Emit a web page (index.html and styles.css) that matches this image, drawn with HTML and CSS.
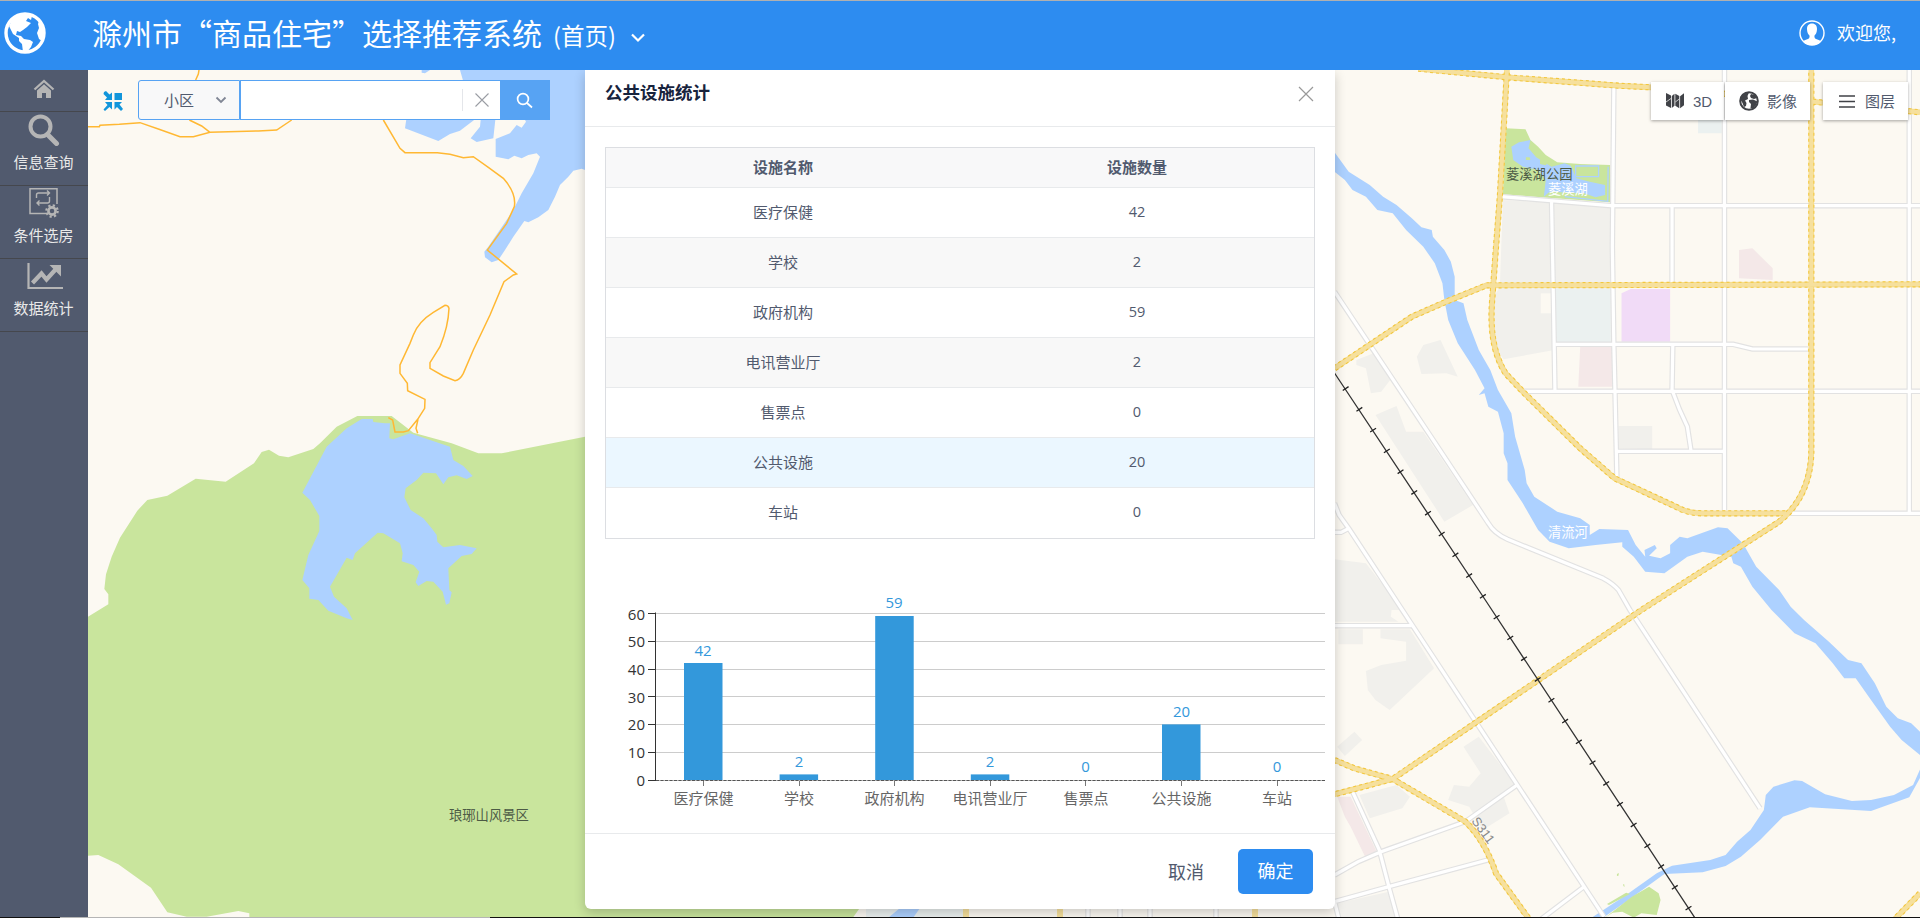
FILE: index.html
```html
<!DOCTYPE html>
<html lang="zh-CN">
<head>
<meta charset="utf-8">
<title>滁州市“商品住宅”选择推荐系统</title>
<link rel="stylesheet" href="styles.css">
</head>
<body>
<div class="app">
  <header class="header">
    <svg class="logo" viewBox="0 0 42 42"><circle cx="21" cy="21" r="19" fill="none" stroke="#fff" stroke-width="3.4"/><path fill="#fff" d="M8 8 L14 4 L22 2 L28 4 L27 8 L24 6 L22 9 L27 11 L23 15 L19 18 L16 20 L13 19 L12 23 L17 24 L20 27 L26 28 L29 30 L27 35 L23 40 L19 40 L18 32 L15 29 L15 26 L9 22 L5 14z"/><path fill="#fff" d="M35 9l3 4 2 8-2 8-3-2-2-6 2-5-1-4z"/></svg>
    <h1 class="title">滁州市“商品住宅”选择推荐系统</h1>
    <span class="subtitle">(首页)</span>
    <svg class="caret" viewBox="0 0 16 12"><path d="M2 2.5l6 6 6-6"/></svg>
    <div class="user">
      <svg class="avatar" viewBox="0 0 26 26"><circle cx="13" cy="13" r="12" fill="none" stroke="#fff" stroke-width="1.4"/><path fill="#fff" d="M13 3.5c-3.4 0-5 2.3-5 5.4 0 3.4 1.200 5.400 2.600 6.800 0 1.900-.3 2.700-2.300 3.500-1.900.7-3.400 1.200-4.400 2.300A12 12 0 0 0 13 25a12 12 0 0 0 9.100-3.500c-1-1.100-2.500-1.600-4.400-2.300-2-.8-2.300-1.600-2.300-3.500C16.800 14.300 18 12.300 18 8.900c0-3.100-1.600-5.400-5-5.400z"/></svg>
      <span>欢迎您,</span>
    </div>
  </header>
  <div class="main">
    <nav class="sidebar">
      <a class="side-item home"><svg width="22" height="20" viewBox="0 0 22 20"><path d="M1.500 10.500L11 2l9.500 8.500" fill="none" stroke="#b5b5b5" stroke-width="2.300"/><path fill="#b5b5b5" d="M4 11.500l7-6.200 7 6.200V19h-5v-5H9v5H4z"/></svg></a>
      <a class="side-item first"><svg width="34" height="32" viewBox="0 0 34 32"><circle cx="13.500" cy="12.500" r="10" fill="none" stroke="#b5b5b5" stroke-width="4"/><path d="M20.500 20.500l9 9" stroke="#b5b5b5" stroke-width="5" stroke-linecap="round"/></svg><span>信息查询</span></a>
      <a class="side-item"><svg width="34" height="32" viewBox="0 0 34 32" fill="none" stroke="#b5b5b5"><path d="M19 26.500H3V1.700h27V17" stroke-width="1.500"/><path d="M9.500 11V8q0-2 2-2h11M20 3.500l2.500 2.500L20 8.500M22.500 10v4q0 2-2 2H10M12.500 13.500L10 16l2.500 2.500" stroke-width="1.400"/><circle cx="25" cy="24" r="3.600" stroke-width="2.600"/><circle cx="25" cy="24" r="5.700" stroke-width="2.200" stroke-dasharray="2.240 2.240"/></svg><span>条件选房</span></a>
      <a class="side-item"><svg width="38" height="32" viewBox="0 0 38 32"><path d="M3.500 3v25H38" fill="none" stroke="#b5b5b5" stroke-width="2.200"/><path d="M7.500 23l9-9.500 5 6L31 9" fill="none" stroke="#b5b5b5" stroke-width="4.200"/><path fill="#b5b5b5" d="M24.500 5H36v11.500z"/></svg><span>数据统计</span></a>
    </nav>
    <section class="map-area">
      <svg class="map" viewBox="88 70 1832 847" preserveAspectRatio="none">
        <defs>
          <g id="streets">
            <g transform="translate(1320 0) scale(.38265 .33333)">
              <path d="M768 255L764 740L768 1040L771 1180L776 1437M605 600L610 900L614 1172M475 590L760 617H1568M920 618V850M1057 200V1530M1540 200V1538"/>
              <g transform="translate(0 870)"><path d="M615 163H1080L1130 177H1275M922 165L920 300L940 360L960 410L970 485M530 304H1568M775 484H1057M1230 670H1568M38 5L290 440L440 700Q455 730 490 748L740 865Q765 880 780 900L810 960L1150 1555M38 640L50 675L75 715L215 960L742 1880M38 727H55L75 715"/></g>
              <g transform="translate(0 1800)"><path d="M38 77H240M38 825L100 785L160 755L380 665L515 555M85 575L155 750L180 860L204 960M38 905L180 860L445 778M575 960L690 860M38 905L50 960"/></g>
            </g>
          </g>
          <g id="highways">
            <g transform="translate(1320 0) scale(.38265 .33333)">
              <path d="M489 200L480 385L470 590L460 740L450 900Q440 1040 485 1120L530 1175L680 1345L770 1435L930 1520Q960 1540 1000 1540H1218M257 206L490 232L780 257L865 262L1290 305L1568 337M38 1105L240 950L330 905L435 856L1568 853M1284 200V1360Q1280 1490 1200 1565L840 1830L190 2337L38 2383M38 2280L90 2305L190 2337L380 2465Q430 2520 460 2620L548 2760M1568 2680L1500 2760"/>
            </g>
          </g>
        </defs>
        <rect x="88" y="70" width="1832" height="847" fill="#fcf9f2"/>
        <g transform="translate(80 60) scale(.33333)">
          <path class="water" d="M1140 30H1530V335L1505 326L1480 332L1465 350L1440 375L1425 410L1405 450L1375 472L1345 487L1333 483L1300 530L1275 570L1255 600L1235 607L1215 592L1213 575L1225 560L1300 450L1325 400L1360 340L1380 290L1370 280L1345 285L1325 295L1303 287L1285 298L1247 290V237L1290 220L1310 195L1325 203L1338 185L1330 170H1247L1240 235L1190 246L1172 235L1200 200L1203 170H1195L1140 212L1110 222L1075 243L975 205L980 170L1160 100zM1025 30H1050L1035 40L1025 38z"/>
        </g>
        <g transform="translate(80 400) scale(.33333)">
          <path class="park" d="M24 650L85 613V583L73 567L78 523L95 470L120 413L172 332L202 300L262 287L347 236L437 245L522 190L545 156L567 149L597 167L625 172L700 147L720 130L770 80L832 48H935L1000 98L1115 130L1195 160H1265L1515 110L2500 1000L2342 1520L2318 1554H508V1540L475 1533L380 1550H320L262 1537L213 1463L115 1393L55 1365L24 1367z"/>
          <path class="water" d="M845 57H878L880 66L915 70H930L928 115L940 118L990 100L1110 140L1120 180L1150 198L1178 228L1160 237L1130 226L1105 232L1090 253L1075 230L1068 220L1030 218L1010 240L977 265L973 292L992 330L1030 355L1055 385L1070 405L1072 425L1090 442L1140 435L1190 445L1175 462L1145 468L1105 505L1108 570L1115 577L1108 610L1098 614L1088 575L1060 545L1040 543L1015 558L1007 547L1018 515L1000 495L965 484L968 460L960 430L910 400L893 398L825 460L818 480L800 473L750 560L762 590L800 625L818 660L800 655L745 632L715 600L688 596V565L667 540L685 465L718 393V348L690 300L667 278L740 140L800 85z"/>
        </g>
        <g class="trail" transform="translate(80 60) scale(.33333)">
          <path d="M24 200H58L60 196L118 193L180 188L235 207L300 230H340L390 217L535 213L590 210L635 180M328 180L365 198L390 217M357 30L355 42L347 60M910 180L960 265L975 278H1072L1110 283L1150 293L1180 290L1225 322L1270 355Q1310 400 1303 440L1280 490L1222 570L1310 642L1300 645L1272 665L1230 765L1180 870L1150 940Q1140 960 1125 962L1090 948L1050 925V908L1080 860Q1105 800 1107 745Q1105 736 1095 736L1060 757Q1015 785 1000 825L990 850L960 915V940L982 970L983 992L1035 1018L1034 1045L1013 1078L985 1112L970 1116H945L938 1080L925 1073M1014 1078L1008 1105L1013 1120"/>
        </g>
        <g transform="translate(1320 0) scale(.38265 .33333)">
          <path class="block" d="M478 600L758 620V870H612V1050L480 1078L455 1040V890L470 860z"/>
          <path fill="#fcf9f2" d="M577 880H612V940H577z"/>
          <path class="civic" d="M615 867H760V1030H615zM988 340H1050V400H988z"/>
          <path fill="#f1dbf7" d="M788 880L812 867H915V1025H788z"/>
          <path class="pink" d="M1095 750L1130 745L1183 805V840L1095 835zM680 1040H765V1160H675z"/>
          <path class="park" d="M485 385L537 388L550 420L570 440L590 465L620 487L680 492L758 495V607L478 583z"/>
          <path class="water" d="M500 440L520 427L550 420L545 445L565 472L590 490L605 500L640 490L655 497L670 535L705 545L745 555V585L720 592L690 580L600 575L585 590L590 540L570 510L530 500L505 480z"/>
          <path fill="none" stroke="#add1ff" stroke-width="1.300" d="M668 498H728V530H668zM640 590L752 604L753 500"/>
          <path class="park" d="M538 472l10 0 2 8-12 0zM575 480l25 0-10 16-15-4z"/>
          <path class="water" d="M38 457L75 515L130 555L165 590L200 615L240 655L265 682L292 690L295 710L325 750L342 785L352 830L352 900L375 910L385 960L415 1050L445 1110L465 1170L500 1240L510 1310L535 1410L540 1450L560 1490L620 1535L680 1555L705 1575V1605L730 1587L805 1590L825 1635L850 1670L848 1650L875 1635L880 1645L860 1667L890 1675L915 1660V1635L940 1610L960 1615L1040 1582L1065 1585L1105 1630L1140 1700L1200 1770L1230 1820L1265 1860L1330 1925L1380 1980L1415 1990L1450 2050L1480 2120L1510 2155L1545 2170L1568 2195V2265L1520 2220L1490 2180L1440 2100L1400 2035H1370L1340 1990L1295 1930L1240 1900L1180 1830L1130 1760L1100 1700L1080 1690L1075 1670L1000 1655L960 1670L900 1720L850 1715L820 1670L790 1640V1627L720 1635L650 1645L600 1625L570 1590L530 1510L490 1440V1390L480 1360V1300L465 1235L440 1220L430 1180L415 1185L430 1165L405 1110L360 1030L335 960L325 900L320 850L300 790L270 740L225 690L190 640L150 630L120 590L85 570L65 540L38 515z"/>
        </g>
        <g transform="translate(1320 290) scale(.38265 .33333)">
          <path class="block" d="M780 408H868V478L780 475zM270 165L315 150L360 260L330 250L265 252L253 200zM95 210L140 190L190 260L160 305L133 310L120 235L95 225zM145 375L200 348L225 425H270L400 645L325 695zM38 808L120 820L215 960H38z"/>
        </g>
        <g transform="translate(1320 600) scale(.38265 .33333)">
          <path class="block" d="M38 0H190L185 50L205 65H38zM48 88H112V133H48zM158 88H235L298 205L182 330L145 300L125 270L120 213L160 195L225 182V125L158 115zM45 440L90 395L110 420L65 468zM103 585L200 555L235 590L215 625L130 655zM375 440L415 410L515 560L480 590L495 640L425 690L390 620L335 600L350 555L390 560L420 520zM45 910L180 875L200 960H55z"/>
          <path class="pink" d="M45 590L80 590L150 760L118 770L80 680L65 650z"/>
          <path class="water" d="M1575 490L1550 555L1500 585L1440 600L1390 603L1320 583L1260 543L1240 541L1185 560L1165 585L1160 630L1125 690L1090 725L1060 765L1020 780L920 797L880 820L800 885L710 953H740L800 905L900 822L1000 817L1060 798L1100 770L1150 720L1210 650L1280 622L1440 633L1540 592L1575 520z"/>
          <path class="park" d="M750 912L800 878L810 882L755 915zM745 953L815 890L860 860L885 880L890 900L880 945L840 940L820 953L790 935L765 938zM776 822l5-3-1 8-4 1zM792 853l3 0 1 8-3-3z"/>
        </g>
        <g><rect x="866" y="908" width="100" height="10" fill="#ebf1f0"/><path class="water" d="M888 918L900 908H920L913 918z"/></g>
        <use href="#streets" class="street-case"/>
        <use href="#streets" class="street"/>
        <use href="#highways" class="highway-case"/>
        <use href="#highways" class="highway-dots"/>
        <use href="#highways" class="highway"/>
        <path class="street-case" d="M1088 908V918M1120 908V918M1150 908V918M1216 908V918"/><path class="street" d="M1088 908V918M1120 908V918M1150 908V918M1216 908V918"/>
        <path class="highway-case" d="M966 908V918M1060 908V918M1255 908V918"/><path class="highway" d="M966 908V918M1060 908V918M1255 908V918"/>
        <path class="rail" d="M1334.500 373L1485.300 600L1695 918"/>
        <path class="rail-ties" d="M1345.300 388L1485.300 600L1695 918"/>
        <text class="map-label" x="449" y="820">琅琊山风景区</text>
        <text class="map-label" x="1506" y="179">菱溪湖公园</text>
        <text class="map-label light" x="1548" y="194">菱溪湖</text>
        <text class="map-label light" x="1548" y="537">清流河</text>
        <text class="map-label road-no" transform="translate(1471 821) rotate(54)">S311</text>
      </svg>

      <div class="search-bar">
        <svg class="compress" viewBox="0 0 20 20" fill="#1296db"><path d="M11.500 2H19v7h-7.500zM1 1l2-1 3.500 3.500L9 1.500V9H2l2-2.500L.5 3zM2 11h7v7.500L6.500 16 2 20l-1.500-1.500L4.500 14zM11.500 11H19l-2.500 2.500L20 18l-2 2-4-4-2.500 2.500z"/></svg>
        <div class="select"><span>小区</span><svg width="12" height="8" viewBox="0 0 12 8"><path d="M1.500 1.500L6 6l4.500-4.500" fill="none" stroke="#808695" stroke-width="1.800"/></svg></div>
        <div class="field"><span class="clear"><svg width="14" height="14" viewBox="0 0 14 14"><path d="M.5.500l13 13M13.500.500l-13 13" stroke="#9a9da4" stroke-width="1.100"/></svg></span></div>
        <div class="go"><svg width="17" height="17" viewBox="0 0 17 17" fill="none" stroke="#fff" stroke-width="1.700"><circle cx="7" cy="7" r="5.400"/><path d="M11 11l5 4.500"/></svg></div>
      </div>

      <div class="tools">
        <div class="tool t3d"><svg width="18" height="16" viewBox="0 0 18 16" fill="#404247"><path d="M0 0l5 2.500v12.500L0 12.500zM5.800 3L8.500.8v12L5.800 15zM9.300.8l4 2.200v12.200l-4-2.400zM14.100 3.200L18 .3v12l-3.900 3z"/><path d="M0 9l5-3.500M9.300 9l4-3" stroke="#fff" stroke-width=".7"/></svg><span>3D</span></div>
        <div class="tool"><svg width="20" height="20" viewBox="0 0 20 20"><circle cx="10" cy="10" r="8.800" fill="#fff" stroke="#404247" stroke-width="2"/><path fill="#404247" d="M2 5l4-3 4-.5L8.500 5 9 8 6 9.500 7.500 12 7 15l-2 1-1.500-4L1 8zM12 3l4 1 2 3-3 1-3-1-1-2zM10 9l4-.5 4.500 2L17 14l-3 4-2.500-1 .5-4-2-2z"/></svg><span>影像</span></div>
        <div class="tool layers"><svg width="16" height="13" viewBox="0 0 16 13"><path d="M0 1h16M0 6.500h16M0 12h16" stroke="#404247" stroke-width="1.400"/></svg><span>图层</span></div>
      </div>

      <div class="modal">
        <div class="modal-head"><h2>公共设施统计</h2><svg width="16" height="16" viewBox="0 0 16 16"><path d="M1 1l14 14M15 1L1 15" stroke="#999" stroke-width="1.200"/></svg></div>
        <div class="modal-body">
          <div class="table">
            <div class="row th"><span>设施名称</span><span>设施数量</span></div>
            <div class="row"><span>医疗保健</span><span>42</span></div>
            <div class="row"><span>学校</span><span>2</span></div>
            <div class="row"><span>政府机构</span><span>59</span></div>
            <div class="row"><span>电讯营业厅</span><span>2</span></div>
            <div class="row"><span>售票点</span><span>0</span></div>
            <div class="row active"><span>公共设施</span><span>20</span></div>
            <div class="row"><span>车站</span><span>0</span></div>
          </div>
          <svg class="chart" viewBox="605 588 725 230">
            <path d="M656 613.500H1325M656 641.500H1325M656 669.500H1325M656 696.500H1325M656 724.500H1325M656 752.500H1325" stroke="#ccc"/>
            <g fill="#3398db"><rect x="684" y="663" width="38.500" height="117"/><rect x="779.600" y="774.400" width="38.500" height="5.600"/><rect x="875.200" y="616" width="38.500" height="164"/><rect x="970.800" y="774.400" width="38.500" height="5.600"/><rect x="1162" y="724.400" width="38.500" height="55.600"/></g>
            <path d="M655.500 612.500V781M648 613.500h7M648 641.500h7M648 669.500h7M648 696.500h7M648 724.500h7M648 752.500h7M648 780.500h7" stroke="#333"/>
            <path d="M656 780.500H1325" stroke="#bbb"/><path d="M656 780.500H1325" stroke="#555" stroke-dasharray="3 1.500"/>
            <path d="M703.500 781v5M799.500 781v5M894.500 781v5M990.500 781v5M1085.500 781v5M1181.500 781v5M1277.500 781v5" stroke="#777"/>
            <g class="y-labels"><text x="645" y="619.500">60</text><text x="645" y="647">50</text><text x="645" y="675">40</text><text x="645" y="703">30</text><text x="645" y="730">20</text><text x="645" y="758">10</text><text x="645" y="786">0</text></g>
            <g class="values"><text x="703" y="656">42</text><text x="799" y="767">2</text><text x="894" y="608">59</text><text x="990" y="767">2</text><text x="1085.500" y="772">0</text><text x="1181.500" y="717">20</text><text x="1277" y="772">0</text></g>
            <g class="x-labels"><text x="703.500" y="804">医疗保健</text><text x="799" y="804">学校</text><text x="894.500" y="804">政府机构</text><text x="990" y="804">电讯营业厅</text><text x="1086" y="804">售票点</text><text x="1181.500" y="804">公共设施</text><text x="1277" y="804">车站</text></g>
          </svg>
        </div>
        <div class="modal-foot"><span class="cancel">取消</span><span class="ok">确定</span></div>
      </div>
    </section>
  </div>
  <div class="edge"><i></i></div>
</div>
</body>
</html>
```

FILE: styles.css
```css
* { box-sizing: border-box; }
body { margin: 0; font-family: "Noto Sans CJK SC", sans-serif; color: #515a6e; overflow: hidden; }
.app { width: 1920px; height: 918px; display: flex; flex-direction: column; }
svg { flex: none; }

.header { height: 70px; flex: none; border-top: 1px solid #b0b0b0; background: #2d8cf0; color: #fff; display: flex; align-items: center; padding: 0 24px 0 4px; position: relative; z-index: 3; }
.logo { width: 42px; height: 42px; margin-bottom: 5px; }
.title { margin: 0 0 8px 46px; font-size: 30px; line-height: 40px; font-weight: 400; white-space: nowrap; }
.subtitle { font-size: 23.500px; line-height: 32px; margin: 0 0 1px 11px; white-space: nowrap; }
.caret { width: 16px; height: 12px; margin: 5px 0 0 14px; fill: none; stroke: #fff; stroke-width: 2.200; }
.user { margin-left: auto; display: flex; align-items: center; font-size: 18px; line-height: 26px; padding-bottom: 5px; }
.user span { padding-bottom: 3px; }
.avatar { width: 26px; height: 26px; margin-right: 12px; }

.main { flex: 1; display: flex; min-height: 0; }
.sidebar { width: 88px; flex: none; background: #515a6e; }
.side-item { height: 73px; display: flex; flex-direction: column; align-items: center; border-bottom: 1px solid #45474d; color: #e9e9e9; font-size: 15px; line-height: 22px; padding: 1px 1px 0 0; }
.side-item span { margin-top: 5px; }
.side-item.home { height: 42px; padding-top: 9px; }
.side-item.first { height: 74px; padding-top: 2px; }

.map-area { flex: 1; position: relative; overflow: hidden; min-width: 0; }
.map { position: absolute; left: 0; top: 0; width: 1832px; height: 847px; }
.map path { vector-effect: non-scaling-stroke; }
.water { fill: #add1ff; }
.park { fill: #c9e59d; }
.block { fill: #f1f0ec; }
.civic { fill: #ebf1f0; }
.pink { fill: #f4e8e8; }
.trail { fill: none; stroke: #ffb833; stroke-width: 1.500; }
.street-case { fill: none; stroke: #e2e2e2; stroke-width: 5.500; }
.street { fill: none; stroke: #fff; stroke-width: 3.200; }
.highway-case { fill: none; stroke: #f6dc88; stroke-width: 5.600; }
.highway-dots { fill: none; stroke: #f2c740; stroke-width: 6.200; stroke-dasharray: 3 3; }
.highway { fill: none; stroke: #f6e09d; stroke-width: 4; }
.rail { fill: none; stroke: #333; stroke-width: 1.300; }
.rail-ties { fill: none; stroke: #222; stroke-width: 7; stroke-dasharray: 1.300 23.600; }
.map-label { font-size: 13.300px; fill: #4c5a45; }
.map-label.light { fill: #fff; }
.map-label.road-no { fill: #888; font-family: "Liberation Sans", sans-serif; font-size: 13px; }

.search-bar { position: absolute; left: 15px; top: 10px; height: 40px; display: flex; align-items: center; }
.compress { width: 20px; height: 20px; margin: 2px 15px 0 0; }
.select { width: 102px; height: 40px; border: 1px solid #57a3f3; border-radius: 3px 0 0 3px; background: #f8f8f9; display: flex; align-items: center; justify-content: space-between; padding: 0 12px 0 25px; font-size: 15px; }
.select span { margin-top: -1px; }
.field { width: 261px; height: 40px; border: 1px solid #57a3f3; background: #fff; display: flex; align-items: center; justify-content: flex-end; padding-right: 11px; }
.clear { height: 22px; border-left: 1px solid #e4e6ea; padding-left: 12px; display: flex; align-items: center; }
.go { width: 49px; height: 40px; background: #57a3f3; display: flex; align-items: center; justify-content: center; padding-right: 2px; }

.tools { position: absolute; left: 1563px; top: 12px; display: flex; gap: 1px; }
.tool { width: 85px; height: 38px; background: #fff; box-shadow: 0 1px 3px rgba(0,0,0,.35); display: flex; align-items: center; padding-left: 14px; gap: 8px; font-size: 15px; }
.tool span { margin-top: -2px; }
.t3d { width: 73px; gap: 9px; padding-left: 15px; font-family: "Liberation Sans", sans-serif; }
.t3d span { margin-top: 1px; }
.layers { margin-left: 12px; padding-left: 16px; gap: 10px; }

.modal { position: absolute; left: 497px; top: 0; width: 750px; height: 839px; background: #fff; border-radius: 0 0 6px 6px; box-shadow: 0 4px 12px rgba(0,0,0,.2); display: flex; flex-direction: column; }
.modal-head { height: 57px; flex: none; border-bottom: 1px solid #e8eaec; display: flex; justify-content: space-between; padding: 12px 21px 0 20px; }
.modal-head h2 { margin: 0; font-size: 17.500px; line-height: 20px; font-weight: 700; color: #17233d; }
.modal-head svg { margin-top: 4px; }
.modal-body { flex: 1; min-height: 0; padding: 20px 20px 0; }
.table { width: 710px; border: 1px solid #dcdee2; }
.row { display: flex; height: 50px; border-bottom: 1px solid #e8eaec; font-size: 15px; line-height: 47px; text-align: center; }
.row span { flex: 1; }
.row span + span { font-family: "Open Sans", "Noto Sans CJK SC", sans-serif; font-size: 14.500px; }
.row:nth-child(odd) { background: #f8f8f8; }
.row.th { height: 40px; line-height: 38px; font-weight: 700; background: #f8f8f9; }
.row.th span + span { font-family: inherit; font-size: 15px; }
.row.active { background: #ebf7ff; }
.row:last-child { border-bottom: 0; background: #fff; }
.chart { display: block; width: 725px; height: 230px; margin: 49px 0 0; overflow: visible; }
.y-labels { font: 15px "Open Sans", sans-serif; fill: #333; text-anchor: end; }
.values { font: 15px "Open Sans", sans-serif; fill: #3398db; text-anchor: middle; }
.x-labels { font-size: 15px; fill: #666; text-anchor: middle; }
.modal-foot { height: 76px; flex: none; border-top: 1px solid #e8eaec; display: flex; justify-content: flex-end; align-items: center; padding-right: 22px; font-size: 18px; }
.cancel { margin-top: -2px; }
.ok { width: 75px; height: 45px; margin-left: 34px; border-radius: 5px; background: #2d8cf0; color: #fff; line-height: 43px; text-align: center; }

.edge { height: 1px; flex: none; background: #111; }
.edge i { display: block; width: 430px; height: 1px; margin-left: 60px; background: #b5b5b5; }
```
